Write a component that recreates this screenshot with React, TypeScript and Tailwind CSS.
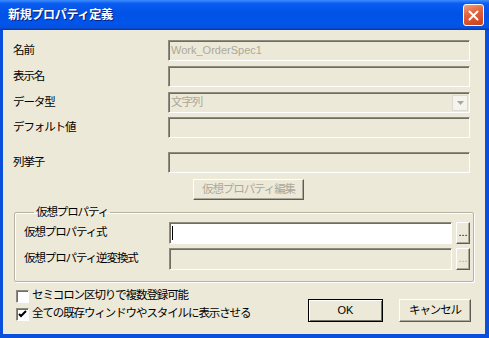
import type { ReactNode } from "react";

// sunken 3D field edge (classic windows look)
const sunken =
  "border border-t-[#8d8b7f] border-l-[#8d8b7f] border-b-white border-r-white shadow-[inset_1px_1px_0_#6f6d63]";
const raised =
  "border border-t-white border-l-white border-b-[#5e5c55] border-r-[#5e5c55] shadow-[inset_-1px_-1px_0_#aca899]";

function Row({ label, mt, children }: { label: string; mt: string; children: ReactNode }) {
  return (
    <div className={`flex items-center h-[21px] ${mt}`}>
      <div className="w-[155px] shrink-0 leading-none">{label}</div>
      <div className="flex-1 h-full">{children}</div>
    </div>
  );
}

function Field({ value, white }: { value?: string; white?: boolean }) {
  return (
    <div
      className={`h-full w-full flex items-center px-[2px] text-[11px] tracking-normal text-[#aca899] ${sunken} ${
        white ? "bg-white" : "bg-[#ece9d8]"
      }`}
    >
      {value}
    </div>
  );
}

function Check({ checked, label }: { checked?: boolean; label: string }) {
  return (
    <div className="flex items-center h-[18px]">
      <div className={`w-[13px] h-[13px] bg-white flex items-center justify-center ${sunken}`}>
        {checked ? (
          <svg width="9" height="9" viewBox="0 0 9 9">
            <path d="M1 4 L3 6 L8 1" stroke="#000" strokeWidth="2" fill="none" />
          </svg>
        ) : null}
      </div>
      <span className="ml-[3px] leading-none">{label}</span>
    </div>
  );
}

export default function App() {
  return (
    <div className="w-[489px] h-[338px] flex flex-col text-[11.5px] tracking-[-1.1px] text-black font-['Liberation_Sans','Noto_Sans_CJK_JP',sans-serif] select-none">
      {/* Title bar */}
      <div className="h-[30px] shrink-0 flex items-center justify-between pl-[8px] pr-[5px] bg-[linear-gradient(180deg,#3c8cff_0%,#0a5cf0_12%,#0052e6_45%,#0055ea_80%,#0a4fd8_93%,#0034b0_100%)]">
        <span className="text-white font-bold text-[12px] tracking-[-0.3px] leading-none [text-shadow:1px_1px_0_#0a1e7a]">
          新規プロパティ定義
        </span>
        <div className="w-[21px] h-[22px] rounded-[3px] border border-white bg-[linear-gradient(160deg,#f0a080_0%,#e2643e_40%,#c7401c_100%)] flex items-center justify-center">
          <svg width="11" height="11" viewBox="0 0 11 11">
            <path d="M1.5 1.5 L9.5 9.5 M9.5 1.5 L1.5 9.5" stroke="#fff" strokeWidth="2" strokeLinecap="round" />
          </svg>
        </div>
      </div>

      {/* Client area */}
      <div className="flex-1 flex flex-col bg-[#ece9d8] border-l-[3px] border-r-[4px] border-b-[4px] border-[#0a4fdc]">
        <div className="pl-[10px] pr-[15px]">
          <Row label="名前" mt="mt-[10px]">
            <Field value="Work_OrderSpec1" />
          </Row>
          <Row label="表示名" mt="mt-[5px]">
            <Field />
          </Row>
          <Row label="データ型" mt="mt-[5px]">
            <div className={`h-full w-full flex items-center justify-between pl-[2px] pr-[1px] bg-[#ece9d8] text-[#aca899] ${sunken}`}>
              <span>文字列</span>
              <div className="w-[16px] h-[16px] bg-[#f4f3ee] border border-[#dcdad0] flex items-center justify-center">
                <svg width="7" height="4" viewBox="0 0 7 4">
                  <path d="M0 0 H7 L3.5 4 Z" fill="#aca899" />
                </svg>
              </div>
            </div>
          </Row>
          <Row label="デフォルト値" mt="mt-[4px]">
            <Field />
          </Row>
          <Row label="列挙子" mt="mt-[14px]">
            <Field />
          </Row>
          <div className="flex mt-[6px] pl-[180px]">
            <div className={`w-[111px] h-[21px] flex items-center justify-center bg-[#ece9d8] text-[#aca899] ${raised}`}>
              仮想プロパティ編集
            </div>
          </div>
        </div>

        {/* Group box */}
        <fieldset className="ml-[11px] mr-[11px] mt-[5px] pl-[9px] pr-[1px] pb-[11px] border border-[#b5b2a3] rounded-[2px] shadow-[inset_1px_1px_0_#fff,1px_1px_0_#fff]">
          <legend className="ml-[10px] px-[2px] leading-[14px]">仮想プロパティ</legend>
          <div className="flex items-center h-[22px] mt-[3px]">
            <div className="w-[145px] shrink-0 leading-none">仮想プロパティ式</div>
            <div className={`w-[283px] h-full bg-white flex items-center pl-[2px] ${sunken}`}>
              <div className="w-[1px] h-[14px] bg-black" />
            </div>
            <div className={`ml-[4px] w-[14px] h-full flex items-end justify-center pb-[5px] text-[11px] tracking-normal leading-none bg-[#ece9d8] ${raised}`}>
              ...
            </div>
          </div>
          <div className="flex items-center h-[22px] mt-[4px]">
            <div className="w-[145px] shrink-0 leading-none">仮想プロパティ逆変換式</div>
            <div className={`w-[283px] h-full bg-[#ece9d8] ${sunken}`} />
            <div className={`ml-[4px] w-[14px] h-full flex items-end justify-center pb-[5px] text-[11px] tracking-normal leading-none bg-[#ece9d8] text-[#aca899] ${raised}`}>
              ...
            </div>
          </div>
        </fieldset>

        {/* Bottom: options and buttons */}
        <div className="flex justify-between pl-[13px] pr-[14px] mt-[5px]">
          <div className="flex flex-col">
            <Check label="セミコロン区切りで複数登録可能" />
            <Check checked label="全ての既存ウィンドウやスタイルに表示させる" />
          </div>
          <div className="flex items-start gap-[16px] mt-[12px]">
            <div className="w-[75px] h-[23px] border border-black bg-[#ece9d8] flex items-center justify-center text-[11px] tracking-normal shadow-[inset_1px_1px_0_#fff,inset_-1px_-1px_0_#716f64]">
              OK
            </div>
            <div className={`w-[72px] h-[23px] bg-[#ece9d8] flex items-center justify-center ${raised}`}>
              キャンセル
            </div>
          </div>
        </div>
      </div>
    </div>
  );
}
